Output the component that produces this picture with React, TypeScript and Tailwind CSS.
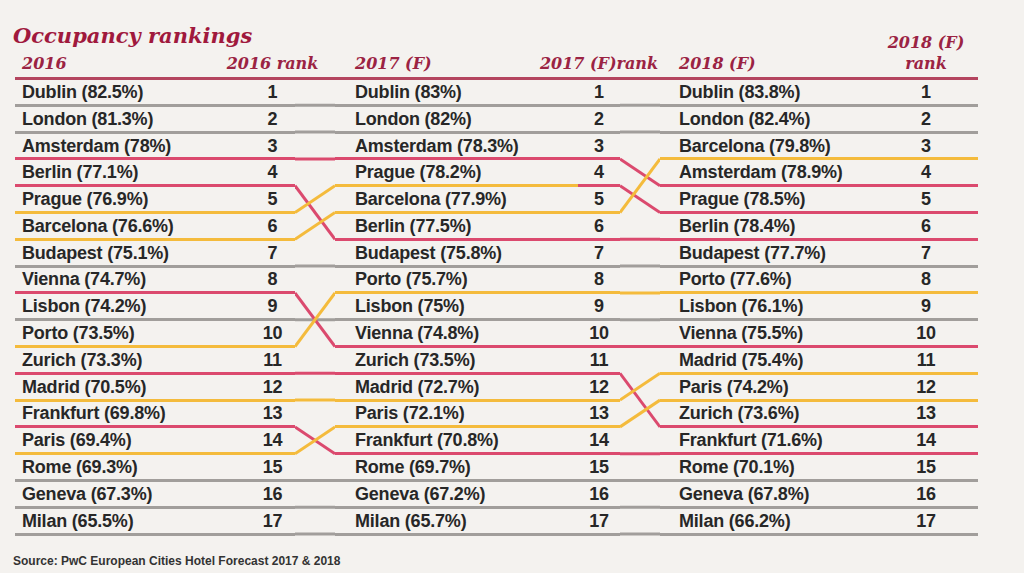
import React from "react";

type Tone = "g" | "r" | "y";

// every class written out so tailwind picks it up
const lineClass: Record<Tone, string> = {
  g: "border-[#a19e9b]",
  r: "border-[#db4a6e]",
  y: "border-[#f4bb3c]",
};

const stroke: Record<Tone, string> = {
  g: "#a19e9b",
  r: "#db4a6e",
  y: "#f4bb3c",
};

const ROW = 26.8;

interface Row {
  city: string;
  line: Tone;
  rankLine?: Tone;
}

const y2016: Row[] = [
  { city: "Dublin (82.5%)", line: "g" },
  { city: "London (81.3%)", line: "g" },
  { city: "Amsterdam (78%)", line: "r" },
  { city: "Berlin (77.1%)", line: "r" },
  { city: "Prague (76.9%)", line: "y" },
  { city: "Barcelona (76.6%)", line: "y" },
  { city: "Budapest (75.1%)", line: "g" },
  { city: "Vienna (74.7%)", line: "r" },
  { city: "Lisbon (74.2%)", line: "g" },
  { city: "Porto (73.5%)", line: "y" },
  { city: "Zurich (73.3%)", line: "r" },
  { city: "Madrid (70.5%)", line: "y" },
  { city: "Frankfurt (69.8%)", line: "r" },
  { city: "Paris (69.4%)", line: "y" },
  { city: "Rome (69.3%)", line: "g" },
  { city: "Geneva (67.3%)", line: "g" },
  { city: "Milan (65.5%)", line: "g" },
];

const y2017: Row[] = [
  { city: "Dublin (83%)", line: "g" },
  { city: "London (82%)", line: "g" },
  { city: "Amsterdam (78.3%)", line: "r" },
  { city: "Prague (78.2%)", line: "y", rankLine: "r" },
  { city: "Barcelona (77.9%)", line: "y" },
  { city: "Berlin (77.5%)", line: "r" },
  { city: "Budapest (75.8%)", line: "g" },
  { city: "Porto (75.7%)", line: "y" },
  { city: "Lisbon (75%)", line: "g" },
  { city: "Vienna (74.8%)", line: "r" },
  { city: "Zurich (73.5%)", line: "r" },
  { city: "Madrid (72.7%)", line: "y" },
  { city: "Paris (72.1%)", line: "y" },
  { city: "Frankfurt (70.8%)", line: "r" },
  { city: "Rome (69.7%)", line: "g" },
  { city: "Geneva (67.2%)", line: "g" },
  { city: "Milan (65.7%)", line: "g" },
];

const y2018: Row[] = [
  { city: "Dublin (83.8%)", line: "g" },
  { city: "London (82.4%)", line: "g" },
  { city: "Barcelona (79.8%)", line: "y" },
  { city: "Amsterdam (78.9%)", line: "r" },
  { city: "Prague (78.5%)", line: "r" },
  { city: "Berlin (78.4%)", line: "r" },
  { city: "Budapest (77.7%)", line: "g" },
  { city: "Porto (77.6%)", line: "y" },
  { city: "Lisbon (76.1%)", line: "g" },
  { city: "Vienna (75.5%)", line: "r" },
  { city: "Madrid (75.4%)", line: "y" },
  { city: "Paris (74.2%)", line: "y" },
  { city: "Zurich (73.6%)", line: "r" },
  { city: "Frankfurt (71.6%)", line: "r" },
  { city: "Rome (70.1%)", line: "g" },
  { city: "Geneva (67.8%)", line: "g" },
  { city: "Milan (66.2%)", line: "g" },
];

// [from rank, to rank, colour]
const links1: [number, number, Tone][] = [
  [1, 1, "g"], [2, 2, "g"], [3, 3, "r"], [4, 6, "r"], [5, 4, "y"], [6, 5, "y"],
  [7, 7, "g"], [8, 10, "r"], [9, 9, "g"], [10, 8, "y"], [11, 11, "r"], [12, 12, "y"],
  [13, 14, "r"], [14, 13, "y"], [15, 15, "g"], [16, 16, "g"], [17, 17, "g"],
];

const links2: [number, number, Tone][] = [
  [1, 1, "g"], [2, 2, "g"], [3, 4, "r"], [4, 5, "r"], [5, 3, "y"], [6, 6, "r"],
  [7, 7, "g"], [8, 8, "y"], [9, 9, "g"], [10, 10, "r"], [11, 13, "r"], [12, 11, "y"],
  [13, 12, "y"], [14, 14, "r"], [15, 15, "g"], [16, 16, "g"], [17, 17, "g"],
];

const order: Tone[] = ["g", "r", "y"];

const Connector = ({ links }: { links: [number, number, Tone][] }) => {
  const h = ROW * 17;
  const sorted = [...links].sort((a, b) => order.indexOf(a[2]) - order.indexOf(b[2]));
  return (
    <svg width="40" height={h} viewBox={`0 0 40 ${h}`} className="shrink-0 block">
      {sorted.map(([from, to, tone]) => (
        <line
          key={`${from}-${to}`}
          x1={0}
          y1={ROW * from - 1.5}
          x2={40}
          y2={ROW * to - 1.5}
          stroke={stroke[tone]}
          strokeWidth={3}
        />
      ))}
    </svg>
  );
};

const Section = ({
  rows,
  cityW,
  rankW,
  pad,
}: {
  rows: Row[];
  cityW: string;
  rankW: string;
  pad: string;
}) => (
  <div className="flex flex-col shrink-0">
    {rows.map((r, i) => (
      <div key={r.city} className="flex h-[26.8px]">
        <div
          className={`${cityW} ${pad} ${lineClass[r.line]} border-b-[3px] pt-[1px] flex items-center whitespace-nowrap`}
        >
          {r.city}
        </div>
        <div
          className={`${rankW} ${lineClass[r.rankLine ?? r.line]} border-b-[3px] pt-[1px] flex items-center justify-center`}
        >
          {i + 1}
        </div>
      </div>
    ))}
  </div>
);

const head = "font-['DejaVu_Serif',serif] font-bold italic text-[#9b2343] text-[16px] leading-[20px] whitespace-nowrap";

export default function App() {
  return (
    <div className="w-[1024px] h-[573px] bg-[#f4f2ef] pl-[15px] pt-[22px] overflow-hidden font-['Liberation_Sans',Arial,sans-serif]">
      <div className="w-[963px] flex items-end border-b-[3px] border-[#b4455f] pb-[3px]">
        <div className="flex flex-col">
          <h1 className="font-['DejaVu_Serif',serif] font-bold italic text-[#a0193d] text-[21px] leading-[27px] -ml-[2px]">
            Occupancy rankings
          </h1>
          <div className="flex mt-[5px]">
            <div className={`${head} w-[235px] pl-[7px]`}>2016</div>
            <div className={`${head} w-[45px] flex justify-center`}>2016 rank</div>
            <div className="w-[40px]" />
            <div className={`${head} w-[243px] pl-[20px]`}>2017 (F)</div>
            <div className={`${head} w-[42px] flex justify-center`}>2017 (F)rank</div>
            <div className="w-[40px]" />
            <div className={`${head} w-[214px] pl-[19px]`}>2018 (F)</div>
          </div>
        </div>
        <div className={`${head} w-[104px] leading-[21px] text-center`}>
          2018 (F)
          <br />
          rank
        </div>
      </div>

      <div className="flex text-[18px] font-bold text-[#272727] tracking-[-0.2px]">
        <Section rows={y2016} cityW="w-[235px]" rankW="w-[45px]" pad="pl-[7px]" />
        <Connector links={links1} />
        <Section rows={y2017} cityW="w-[243px]" rankW="w-[42px]" pad="pl-[20px]" />
        <Connector links={links2} />
        <Section rows={y2018} cityW="w-[214px]" rankW="w-[104px]" pad="pl-[19px]" />
      </div>

      <p className="mt-[18px] -ml-[2px] text-[12px] leading-[14px] font-bold text-[#333]">
        Source: PwC European Cities Hotel Forecast 2017 &amp; 2018
      </p>
    </div>
  );
}
